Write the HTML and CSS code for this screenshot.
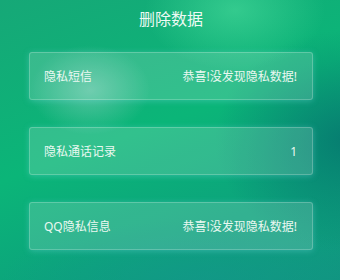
FILE: index.html
```html
<!DOCTYPE html>
<html lang="zh-CN">
<head>
    <meta charset="UTF-8">
    <meta name="viewport" content="width=device-width, initial-scale=1.0">
    <title>删除数据</title>
    <link rel="stylesheet" href="styles.css">
</head>
<body>
    <div class="page">
        <h1 class="title">删除数据</h1>

        <div class="list">
            <div class="card">
                <span class="card-name">隐私短信</span>
                <span class="card-value">恭喜!没发现隐私数据!</span>
            </div>
            <div class="card">
                <span class="card-name">隐私通话记录</span>
                <span class="card-value">1</span>
            </div>
            <div class="card">
                <span class="card-name">QQ隐私信息</span>
                <span class="card-value">恭喜!没发现隐私数据!</span>
            </div>
        </div>
    </div>
</body>
</html>
```

FILE: styles.css
```css
* {
    margin: 0;
    padding: 0;
    box-sizing: border-box;
    font-family: 'Noto Sans', 'Noto Sans CJK SC', sans-serif;
}

html, body {
    width: 340px;
    height: 280px;
    overflow: hidden;
}

body {
    background:
        radial-gradient(ellipse 90px 60px at 235px 10px, rgba(80, 225, 160, 0.55), rgba(80, 225, 160, 0) 100%),
        radial-gradient(ellipse 60px 45px at 90px 90px, rgba(170, 220, 210, 0.45), rgba(170, 220, 210, 0) 100%),
        radial-gradient(ellipse 130px 110px at 345px 140px, rgba(5, 115, 110, 0.8), rgba(5, 115, 110, 0) 100%),
        radial-gradient(ellipse 200px 60px at 200px 280px, rgba(20, 150, 140, 0.6), rgba(20, 150, 140, 0) 100%),
        linear-gradient(160deg, #16a877 0%, #0bb578 45%, #0ca37c 75%, #10957f 100%);
    color: #fff;
}

.page {
    display: flex;
    flex-direction: column;
    padding: 0 27px 0 29px;
}

.title {
    font-size: 16px;
    font-weight: 400;
    text-align: center;
    line-height: 20px;
    padding-top: 9px;
    height: 52px;
    color: #eefaf4;
}

.list {
    display: flex;
    flex-direction: column;
    gap: 27px;
}

.card {
    display: flex;
    justify-content: space-between;
    align-items: center;
    height: 48px;
    padding: 0 15px 0 14px;
    background: rgba(255, 255, 255, 0.16);
    border: 1px solid rgba(255, 255, 255, 0.22);
    border-radius: 3px;
    box-shadow: 0 1px 6px rgba(120, 220, 230, 0.35);
    font-size: 12px;
    color: #eaf8f1;
}
```
